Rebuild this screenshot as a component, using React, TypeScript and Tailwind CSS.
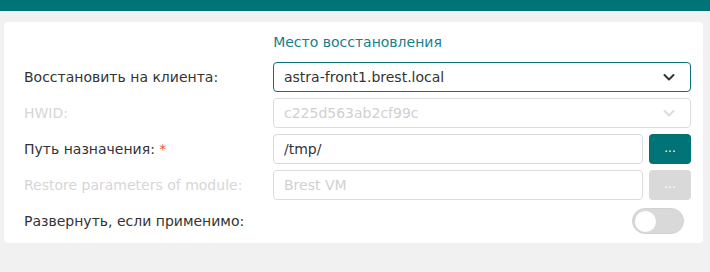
import React from "react";

const font = { fontFamily: '"DejaVu Sans", sans-serif' };

function Chevron({ color }: { color: string }) {
  return (
    <svg width="14" height="14" viewBox="0 0 14 14" fill="none">
      <path d="M2.5 5 L7 9.5 L11.5 5" stroke={color} strokeWidth="2" strokeLinecap="round" strokeLinejoin="round" />
    </svg>
  );
}

export default function App() {
  return (
    <div className="w-[710px] h-[272px] bg-[#f1f1f1] text-[14px]" style={font}>
      <div className="h-[11px] bg-[#007377]" />
      <div className="ml-[4px] mt-[11px] w-[699px] h-[221px] bg-white rounded-[4px] pl-[20px] pr-[12px] pt-[9px]">
        <div className="text-center text-[#17808a] h-[22px] leading-[22px] text-[14px]">Место восстановления</div>
        <div className="mt-[9px] flex flex-col gap-[6px]">
          <div className="flex items-center h-[30px]">
            <div className="w-[249px] text-[#333333]">Восстановить на клиента:</div>
            <div className="flex-1 h-[30px] border border-[#0b7378] rounded-[4px] flex items-center justify-between pl-[10px] pr-[14px] text-[#333333]">
              <span>astra-front1.brest.local</span>
              <Chevron color="#333333" />
            </div>
          </div>
          <div className="flex items-center h-[30px]">
            <div className="w-[249px] text-[#d6d6d6]">HWID:</div>
            <div className="flex-1 h-[30px] border border-[#dcdcdc] rounded-[4px] flex items-center justify-between pl-[10px] pr-[14px] text-[#d0d0d0]">
              <span>c225d563ab2cf99c</span>
              <Chevron color="#dcdcdc" />
            </div>
          </div>
          <div className="flex items-center h-[30px]">
            <div className="w-[249px] text-[#333333]">
              Путь назначения: <span className="text-[#e0573f]">*</span>
            </div>
            <div className="flex-1 h-[30px] border border-[#d9d9d9] rounded-[4px] flex items-center pl-[10px] text-[#333333]">
              /tmp/
            </div>
            <div className="ml-[6px] w-[42px] h-[30px] rounded-[4px] bg-[#007377] text-white flex items-center justify-center text-[12px] pb-[2px]">
              ...
            </div>
          </div>
          <div className="flex items-center h-[30px]">
            <div className="w-[249px] text-[#d6d6d6]">Restore parameters of module:</div>
            <div className="flex-1 h-[30px] border border-[#dcdcdc] rounded-[4px] flex items-center pl-[10px] text-[#d0d0d0]">
              Brest VM
            </div>
            <div className="ml-[6px] w-[42px] h-[30px] rounded-[4px] bg-[#d9d9d9] text-white flex items-center justify-center text-[12px] pb-[2px]">
              ...
            </div>
          </div>
          <div className="flex items-center h-[30px]">
            <div className="flex-1 text-[#333333]">Развернуть, если применимо:</div>
            <div className="mr-[7px] w-[52px] h-[26px] rounded-full bg-[#d9d9d9] border border-[#d2d2d2] flex items-center pl-[2px]">
              <div className="w-[21px] h-[21px] rounded-full bg-white" />
            </div>
          </div>
        </div>
      </div>
    </div>
  );
}
